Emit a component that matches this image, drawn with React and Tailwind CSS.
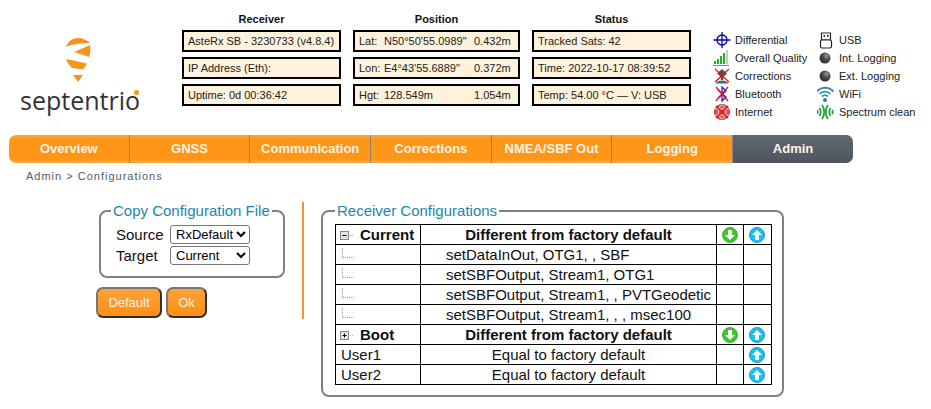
import React from 'react';

const sans = "font-['Liberation_Sans',Arial,sans-serif]";

const InfoBox = ({ children }) => (
  <div className="h-[22px] border-2 border-black bg-[#fff2dc] px-[4px] flex items-center text-[11px] leading-none text-[#222] whitespace-nowrap">
    {children}
  </div>
);

const InfoColumn = ({ title, width, children }) => (
  <div className={`flex flex-col ${width}`}>
    <div className="h-[30px] pt-[13px] text-center text-[11px] leading-[13px] font-bold text-[#111]">{title}</div>
    <div className="flex flex-col gap-[5px]">{children}</div>
  </div>
);

const Logo = () => (
  <div className="w-[182px] pl-[20px] pt-[38px] flex flex-col">
    <svg width="120" height="46" viewBox="20 38 120 46" className="block shrink-0">
      <path d="M66 47 C68 41 73 38 78 38 C83 38 87 40 90 43 C81 43 72 44 66 47Z" fill="#f7931e" />
      <path d="M90 45 L74 52 L89 57 C90.500 53 90.700 49 90 45Z" fill="#f7931e" />
      <path d="M66 59 L87 63.500 C85.500 66 84.500 67.500 83 69.500 L72 68 C69 65 67 62 66 59Z" fill="#f7931e" />
      <path d="M73 75 L83 75 L78 82Z" fill="#f7931e" />
    </svg>
    <div className="relative shrink-0 w-[120px] h-[32px] font-['Open_Sans',sans-serif] text-[25px] leading-[32px] text-[#333] whitespace-nowrap">
      septentrio
      <span className="absolute left-[114px] top-[6px] w-[5px] h-[5px] rounded-full bg-[#f7931e]" />
    </div>
  </div>
);

// status icons, all on a 20x16 box
const IconDifferential = () => (
  <svg width="20" height="16" viewBox="1 0 20 16">
    <circle cx="10" cy="8" r="5" fill="none" stroke="#00008b" strokeWidth="1.300" />
    <path d="M1.500 8H18.500M10 0V16" stroke="#0000c8" strokeWidth="1.300" />
  </svg>
);

const IconQuality = () => (
  <svg width="20" height="16" viewBox="1 0 20 16">
    <rect x="2" y="11" width="2" height="3" fill="#22b01e" />
    <rect x="5" y="9" width="2" height="5" fill="#22b01e" />
    <rect x="8" y="6" width="2" height="8" fill="#22b01e" />
    <rect x="11" y="3" width="2" height="11" fill="#22b01e" />
    <rect x="14" y="0" width="2" height="14" fill="#c9c9c9" />
    <rect x="1" y="15" width="16" height="1" fill="#8a8a8a" />
  </svg>
);

const IconCorrections = () => (
  <svg width="20" height="16" viewBox="1 0 20 16">
    <path d="M10 1L15 5.500L10 10L5 5.500Z" fill="#46545f" />
    <path d="M10 9V12" stroke="#46545f" strokeWidth="2.500" />
    <path d="M3.500 15.500C5 11.500 15 11.500 16.500 15.500Z" fill="#45677f" />
    <path d="M3 1L17 14M17 1L3 14" stroke="#e81010" strokeWidth="1.200" />
  </svg>
);

const IconBluetooth = () => (
  <svg width="20" height="16" viewBox="1 0 20 16">
    <path d="M6 4L14 11L10 15V1L14 5L6 12" fill="none" stroke="#1a1ae0" strokeWidth="1.300" />
    <path d="M4 1L16 15M16 1L4 15" stroke="#e81010" strokeWidth="1.300" />
  </svg>
);

const IconInternet = () => (
  <svg width="20" height="16" viewBox="1 0 20 16">
    <circle cx="10" cy="8" r="7.500" fill="#d65a5a" stroke="#b82828" strokeWidth="1" />
    <ellipse cx="10" cy="8" rx="3.500" ry="7" fill="none" stroke="#f6caca" strokeWidth="1" />
    <path d="M3 5H17M3 11H17" stroke="#f6caca" strokeWidth="1" />
    <path d="M4 2L16 14M16 2L4 14" stroke="#d81818" strokeWidth="1.500" />
  </svg>
);

const IconUsb = () => (
  <svg width="20" height="17" viewBox="1 0 20 17">
    <path d="M5.500 1H14.500V8H5.500Z" fill="#fff" stroke="#222" strokeWidth="1.200" />
    <rect x="7.500" y="3" width="1.700" height="1.700" fill="#222" />
    <rect x="11" y="3" width="1.700" height="1.700" fill="#222" />
    <rect x="4.500" y="8" width="11" height="8" rx="1.500" fill="#fff" stroke="#222" strokeWidth="1.200" />
  </svg>
);

const IconLed = ({ id }) => (
  <svg width="20" height="16" viewBox="2 0 20 16">
    <defs>
      <radialGradient id={id} cx="0.650" cy="0.300" r="0.800">
        <stop offset="0" stopColor="#9a9a9a" />
        <stop offset="0.450" stopColor="#4a4a4a" />
        <stop offset="1" stopColor="#262626" />
      </radialGradient>
    </defs>
    <circle cx="10" cy="8" r="5.500" fill={`url(#${id})`} />
  </svg>
);

const IconWifi = () => (
  <svg width="20" height="16" viewBox="2 0 20 16">
    <g fill="none" stroke="#3a8cab" strokeWidth="1.800">
      <path d="M1.500 5.500C6.500 0.500 13.500 0.500 18.500 5.500" />
      <path d="M4.500 8C7.500 4.800 12.500 4.800 15.500 8" />
      <path d="M7 10.500C8.800 8.800 11.200 8.800 13 10.500" />
    </g>
    <circle cx="10" cy="14" r="2" fill="#2e7d9c" />
  </svg>
);

const IconSpectrum = () => (
  <svg width="20" height="16" viewBox="2 0 20 16">
    <g fill="none" stroke="#1fa53a" strokeWidth="1.800">
      <path d="M7 1C10 5 10 11 7 15M13 1C10 5 10 11 13 15" />
      <path d="M4.500 4C6 6.500 6 9.500 4.500 12M15.500 4C14 6.500 14 9.500 15.500 12" />
      <path d="M2 6C2.800 7.300 2.800 8.700 2 10M18 6C17.200 7.300 17.200 8.700 18 10" />
    </g>
  </svg>
);

const StatusItem = ({ icon, label }) => (
  <div className="h-[18px] shrink-0 flex items-center">
    <span className="w-[20px] h-[16px] shrink-0 mr-[2px]">{icon}</span>
    <span className="text-[11px] leading-none text-[#222] whitespace-nowrap">{label}</span>
  </div>
);

const navItems = ['Overview', 'GNSS', 'Communication', 'Corrections', 'NMEA/SBF Out', 'Logging'];

const Navbar = () => (
  <div className="mx-[9px] mt-[1px] w-[844px] h-[28px] flex rounded-[7px] overflow-hidden bg-[linear-gradient(to_bottom,#fba945_0%,#ff9618_14%,#ff9618_86%,#fba945_100%)] text-[13px] font-bold text-[#fff4e6]">
    {navItems.map((item) => (
      <div key={item} className="flex-1 flex items-center justify-center border-r border-[#8f8274] whitespace-nowrap">
        {item}
      </div>
    ))}
    <div className="w-[120px] flex items-center justify-center bg-gradient-to-b from-[#5f6871] to-[#4d565f]">Admin</div>
  </div>
);

const Select = ({ value, options }) => (
  <select
    defaultValue={value}
    className={`${sans} w-[80px] h-[19px] border border-[#767676] rounded-[3px] bg-white text-[13px] leading-none text-black pl-[1px]`}
  >
    {options.map((o) => <option key={o}>{o}</option>)}
  </select>
);

const Button = ({ children, width }) => (
  <button className={`${width} h-[31px] rounded-[7px] border-2 border-t-[#777] border-l-[#777] border-r-[#2e2e2e] border-b-[#2e2e2e] bg-gradient-to-b from-[#fba23a] to-[#ff8f0a] text-[13px] text-[#fff3e2]`}>
    {children}
  </button>
);

const ArrowBtn = ({ dir }) => {
  const green = dir === 'down';
  return (
    <svg width="16" height="16" viewBox="0 0 16 16" className="block mx-auto">
      <circle cx="8" cy="8" r="7.500" fill={green ? '#3cc62e' : '#12c4ee'} stroke={green ? '#4da83a' : '#2a90c8'} strokeWidth="1" />
      {green
        ? <path d="M6 3H10V8H13L8 13L3 8H6Z" fill="#fff" />
        : <path d="M6 13H10V8H13L8 3L3 8H6Z" fill="#fff" />}
    </svg>
  );
};

const TreeBox = ({ plus }) => (
  <svg width="15" height="11" viewBox="0 0 15 11" className="inline-block mr-[5px] align-[-1px]">
    <rect x="0.500" y="1.500" width="8" height="8" fill="#e8e4d8" stroke="#888" />
    <path d="M2.500 5.500H6.500" stroke="#000" />
    {plus && <path d="M4.500 3.500V7.500" stroke="#000" />}
    <path d="M10 5.500H14" stroke="#aaa" strokeDasharray="1 1" />
  </svg>
);

const TreeLine = () => (
  <svg width="14" height="12" viewBox="0 0 14 12" className="block ml-[5px] -mt-[4px]">
    <path d="M1.500 1V10.500H13" fill="none" stroke="#999" strokeDasharray="1 1" />
  </svg>
);

const cell = 'border border-black h-[20px] p-0';

const HeadRow = ({ label, plus, down = true }) => (
  <tr>
    <td className={`${cell} pl-[4px] font-bold whitespace-nowrap`}><TreeBox plus={plus} />{label}</td>
    <td className={`${cell} text-center font-bold`}>Different from factory default</td>
    <td className={cell}>{down && <ArrowBtn dir="down" />}</td>
    <td className={`${cell} pr-[1px]`}><ArrowBtn dir="up" /></td>
  </tr>
);

const CmdRow = ({ text }) => (
  <tr>
    <td className={cell}><TreeLine /></td>
    <td className={`${cell} pl-[25px]`}>{text}</td>
    <td className={cell} />
    <td className={cell} />
  </tr>
);

const UserRow = ({ label }) => (
  <tr>
    <td className={`${cell} pl-[5px]`}>{label}</td>
    <td className={`${cell} text-center`}>Equal to factory default</td>
    <td className={cell} />
    <td className={`${cell} pr-[1px]`}><ArrowBtn dir="up" /></td>
  </tr>
);

export default function App() {
  return (
    <div className={`${sans} w-[931px] h-[409px] bg-white overflow-hidden`}>
      <div className="flex h-[106px]">
        <Logo />
        <div className="flex gap-[12px]">
          <InfoColumn title="Receiver" width="w-[159px]">
            <InfoBox>AsteRx SB - 3230733 (v4.8.4)</InfoBox>
            <InfoBox>IP Address (Eth):</InfoBox>
            <InfoBox>Uptime: 0d 00:36:42</InfoBox>
          </InfoColumn>
          <InfoColumn title="Position" width="w-[167px]">
            <InfoBox><span className="w-[25px]">Lat:</span><span className="w-[90px]">N50°50'55.0989"</span><span>0.432m</span></InfoBox>
            <InfoBox><span className="w-[25px]">Lon:</span><span className="w-[90px]">E4°43'55.6889"</span><span>0.372m</span></InfoBox>
            <InfoBox><span className="w-[25px]">Hgt:</span><span className="w-[90px]">128.549m</span><span>1.054m</span></InfoBox>
          </InfoColumn>
          <InfoColumn title="Status" width="w-[159px]">
            <InfoBox>Tracked Sats: 42</InfoBox>
            <InfoBox>Time: 2022-10-17 08:39:52</InfoBox>
            <InfoBox>Temp: 54.00 °C — V: USB</InfoBox>
          </InfoColumn>
        </div>
        <div className="flex pt-[31px] ml-[22px]">
          <div className="w-[104px] flex flex-col">
            <StatusItem icon={<IconDifferential />} label="Differential" />
            <StatusItem icon={<IconQuality />} label="Overall Quality" />
            <StatusItem icon={<IconCorrections />} label="Corrections" />
            <StatusItem icon={<IconBluetooth />} label="Bluetooth" />
            <StatusItem icon={<IconInternet />} label="Internet" />
          </div>
          <div className="flex flex-col">
            <StatusItem icon={<IconUsb />} label="USB" />
            <StatusItem icon={<IconLed id="led-int" />} label="Int. Logging" />
            <StatusItem icon={<IconLed id="led-ext" />} label="Ext. Logging" />
            <StatusItem icon={<IconWifi />} label="WiFi" />
            <StatusItem icon={<IconSpectrum />} label="Spectrum clean" />
          </div>
        </div>
      </div>

      <div className="pt-[28px]"><Navbar /></div>
      <div className="pl-[26px] pt-[7px] text-[11px] leading-[13px] tracking-[1px] text-[#555b66]">Admin &gt; Configurations</div>

      <div className="flex pt-[19px]">
        <div className="w-[206px] ml-[96px] flex flex-col">
          <fieldset className="ml-[3px] w-[186px] h-[76px] border-2 border-[#808080] rounded-[8px] pl-[10px] pr-[11px]">
            <legend className="px-[2px] text-[15px] leading-[17px] text-[#1a87ad] whitespace-nowrap">Copy Configuration File</legend>
            <div className="grid grid-cols-[54px_80px] gap-y-[2px] mt-[6px] pl-[5px] text-[15px] leading-[19px] text-[#111] items-center">
              <span>Source</span>
              <Select value="RxDefault" options={['RxDefault', 'Current', 'Boot', 'User1', 'User2']} />
              <span>Target</span>
              <Select value="Current" options={['Current', 'Boot', 'User1', 'User2']} />
            </div>
          </fieldset>
          <div className="flex gap-[4px] mt-[9px]">
            <Button width="w-[66px]">Default</Button>
            <Button width="w-[41px]">Ok</Button>
          </div>
        </div>
        <div className="w-[2px] h-[117px] bg-[#ee9633]" />
        <fieldset className="ml-[17px] w-[462px] h-[195px] border-2 border-[#808080] rounded-[8px] pl-[12px] pr-[10px]">
          <legend className="px-[2px] text-[15px] leading-[17px] text-[#1a87ad] whitespace-nowrap">Receiver Configurations</legend>
          <table className="w-[436px] mt-[5px] border-collapse table-fixed text-[15px] leading-[17px] text-[#111]">
            <colgroup>
              <col className="w-[85px]" />
              <col className="w-[296px]" />
              <col className="w-[27px]" />
              <col className="w-[28px]" />
            </colgroup>
            <tbody>
              <HeadRow label="Current" />
              <CmdRow text="setDataInOut, OTG1, , SBF" />
              <CmdRow text="setSBFOutput, Stream1, OTG1" />
              <CmdRow text="setSBFOutput, Stream1, , PVTGeodetic" />
              <CmdRow text="setSBFOutput, Stream1, , , msec100" />
              <HeadRow label="Boot" plus />
              <UserRow label="User1" />
              <UserRow label="User2" />
            </tbody>
          </table>
        </fieldset>
      </div>
    </div>
  );
}
